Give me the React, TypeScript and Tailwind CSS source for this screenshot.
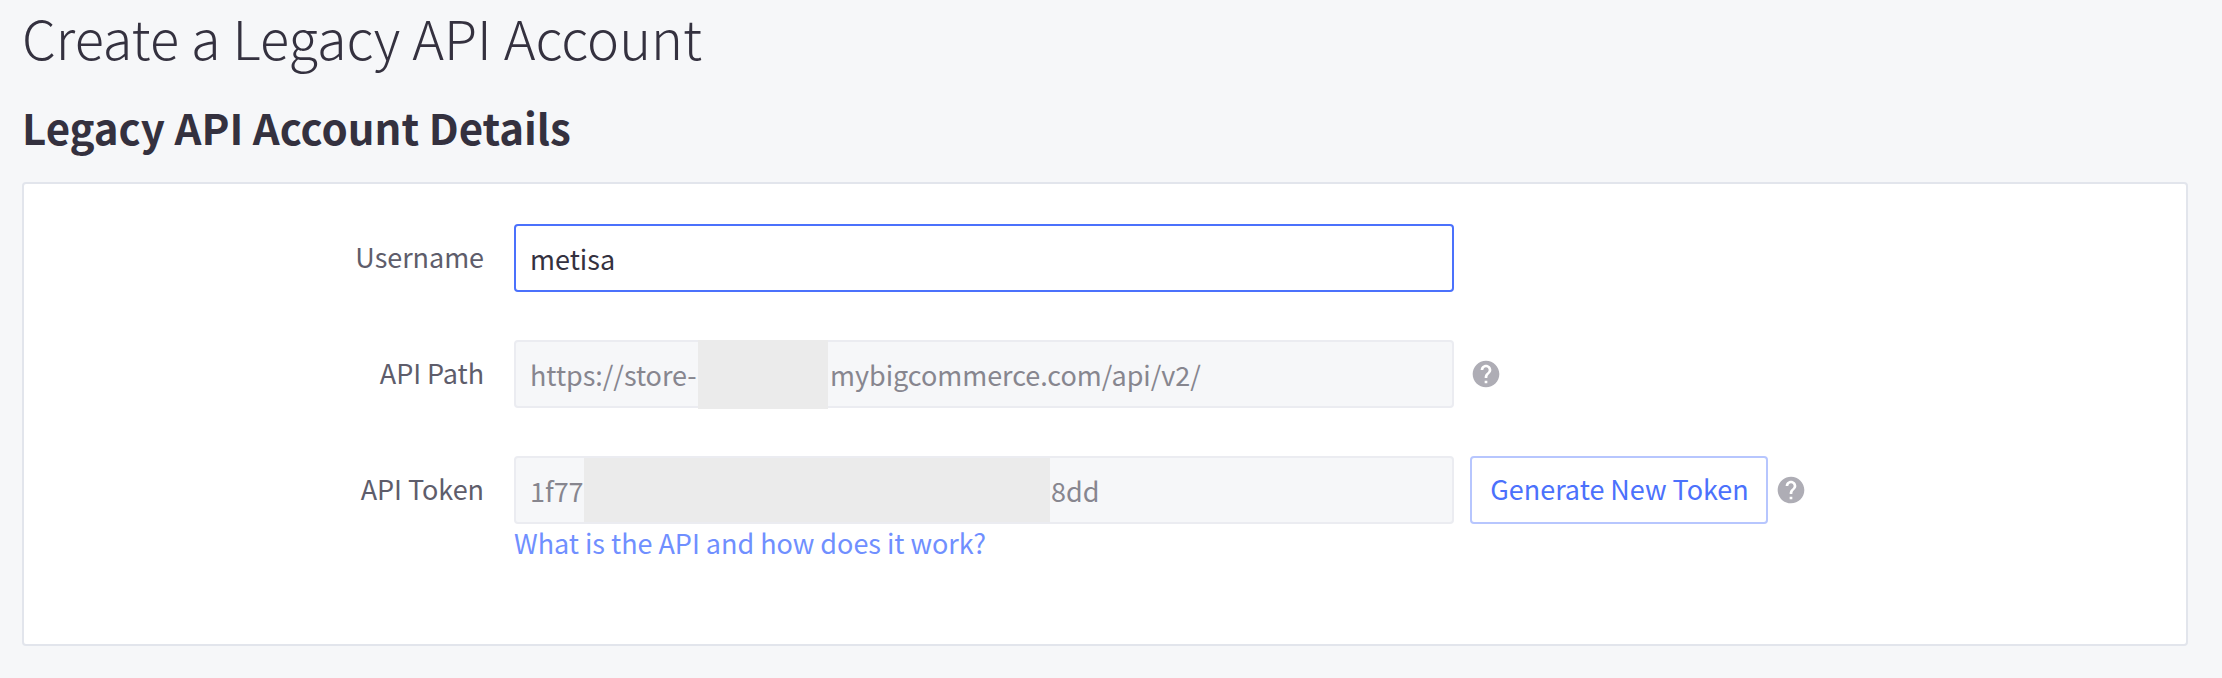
import type { ReactNode } from "react";
import { MdHelp } from "react-icons/md";

function Row({ label, children }: { label: string; children: ReactNode }) {
  return (
    <div className="flex h-[68px]">
      <label className="w-[460px] text-right leading-[66px] tracking-[-0.05px] text-[#5e5d6b]">{label}</label>
      <div className="ml-[30px] flex items-center">{children}</div>
    </div>
  );
}

function ReadOnlyField({ children }: { children: ReactNode }) {
  return (
    <div className="flex h-[68px] w-[940px] rounded-[4px] border-2 border-[#ebecf1] bg-[#f6f7f9] pl-[14px] leading-[66px] tracking-[-0.04px] whitespace-nowrap text-[#87868f]">
      {children}
    </div>
  );
}

export default function App() {
  return (
    <div className="h-[678px] w-[2222px] overflow-hidden bg-[#f6f7f9] pl-[22px] font-['Noto_Sans_CJK_SC',sans-serif] text-[27px] text-[#34313f]">
      <h1 className="h-[72px] text-[54px] leading-[73px] font-light">Create a Legacy API Account</h1>
      <h2 className="text-[42px] leading-[110px] font-semibold">Legacy API Account Details</h2>
      <main className="h-[464px] w-[2166px] rounded-[4px] border-2 border-[#e2e5ec] bg-white pt-[40px]">
        <div className="flex flex-col gap-12">
          <Row label="Username">
            <input
              defaultValue="metisa"
              className="h-[68px] w-[940px] rounded-[4px] border-2 border-[#4b71fc] bg-white pl-[14px] leading-[64px] outline-none"
            />
          </Row>
          <Row label="API Path">
            <ReadOnlyField>
              <span className="w-[168px]">https://store-</span>
              <span className="-mt-[2px] h-[69px] w-[130px] bg-[#ebebeb]" />
              <span className="ml-[2px]">mybigcommerce.com/api/v2/</span>
            </ReadOnlyField>
            <MdHelp className="ml-4 size-[32px] text-[#aeadb5]" />
          </Row>
          <Row label="API Token">
            <ReadOnlyField>
              <span className="w-[54px]">1f77</span>
              <span className="h-[64px] w-[466px] bg-[#ebebeb]" />
              <span className="ml-px">8dd</span>
            </ReadOnlyField>
            <button className="ml-4 h-[68px] w-[298px] rounded-[4px] border-2 border-[#b7c6fe] bg-white pb-1 pl-px leading-[62px] tracking-[-0.03px] whitespace-nowrap text-[#4b71fc]">
              Generate New Token
            </button>
            <MdHelp className="ml-[6.5px] size-[32px] text-[#aeadb5]" />
          </Row>
        </div>
        <a href="#" className="ml-[490px] block w-max leading-[38px] tracking-[-0.03px] text-[#708fff]">
          What is the API and how does it work?
        </a>
      </main>
    </div>
  );
}
